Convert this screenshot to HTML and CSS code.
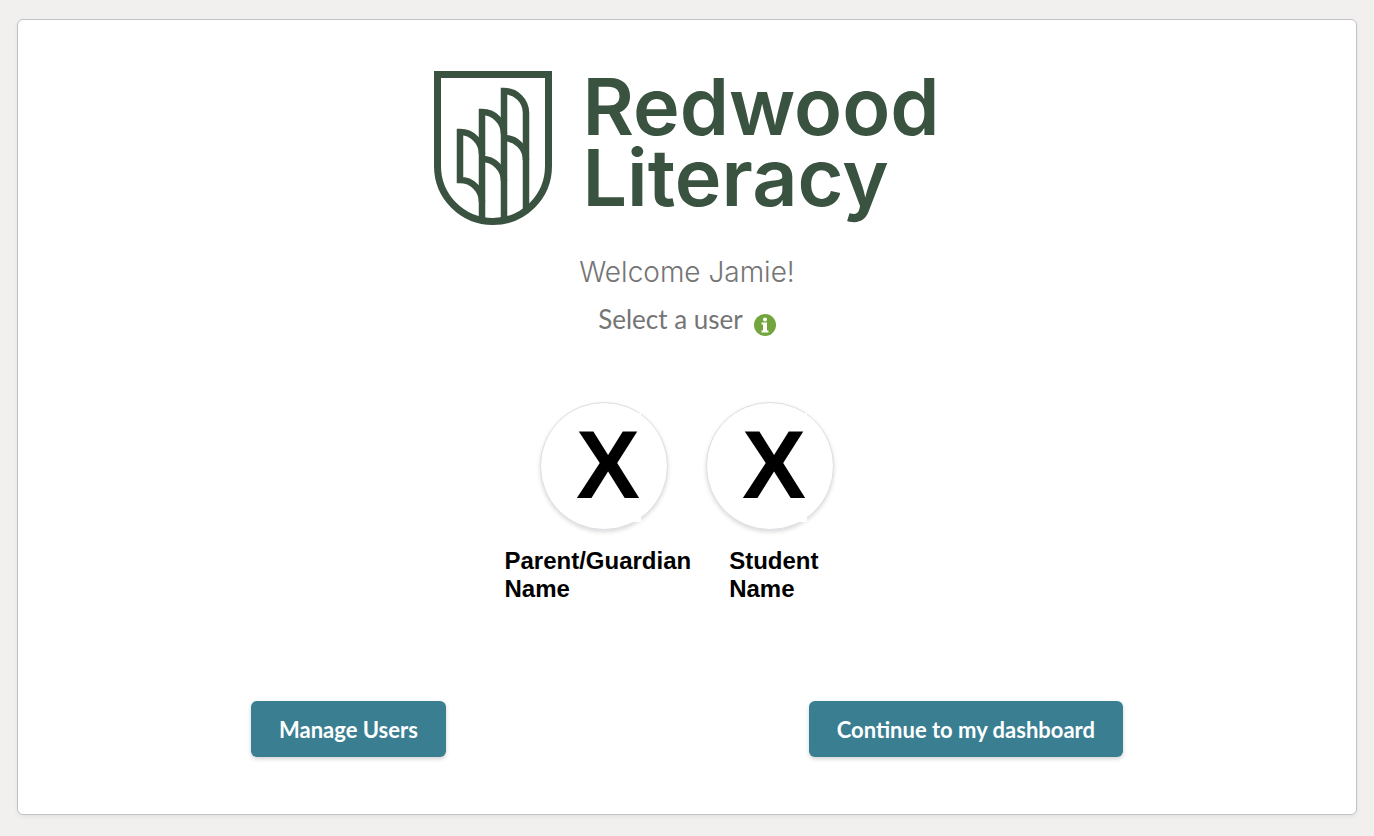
FILE: index.html
```
<!DOCTYPE html>
<html lang="en">
<head>
    <meta charset="UTF-8">
    <meta name="viewport" content="width=device-width, initial-scale=1.0">
    <title>Redwood Literacy</title>
    <link rel="stylesheet" href="styles.css">
</head>
<body>
    <main class="card">
        <div class="logo">
            <svg class="logo-mark" viewBox="0 0 118 154" aria-hidden="true">
                <path class="shield" d="M3.5 3.5H114.5V95A55.5 55.5 0 0 1 3.5 95Z"/>
                <path d="M48 83A22 22 0 0 0 26 61V109A22 22 0 0 1 48 131"/>
                <path d="M48 149V41A22 22 0 0 1 70 63"/>
                <path d="M48 88A22 22 0 0 1 70 110"/>
                <path d="M70 149V20A22 22 0 0 1 92 42V139"/>
                <path d="M70 67A22 22 0 0 1 92 89"/>
            </svg>
            <div class="logo-text">Redwood<br>Literacy</div>
        </div>

        <h1>Welcome Jamie!</h1>
        <div class="select-user">
            <h2>Select a user</h2>
            <button class="info" type="button" aria-label="Info">
                <svg viewBox="0 0 22 22" aria-hidden="true">
                    <circle cx="11" cy="11" r="11"/>
                    <circle class="dot" cx="11" cy="5.5" r="2"/>
                    <path d="M7.500 8.500H13V16.500H14.500V18.500H7.500V16.500H9V10.500H7.500z"/>
                </svg>
            </button>
        </div>

        <div class="avatars">
            <button class="avatar" type="button" aria-labelledby="parentName"><span>X</span></button>
            <button class="avatar" type="button" aria-labelledby="studentName"><span>X</span></button>
        </div>
        <div class="names">
            <div id="parentName">Parent/Guardian<br>Name</div>
            <div id="studentName">Student<br>Name</div>
        </div>

        <div class="actions">
            <button class="btn" type="button">Manage Users</button>
            <button class="btn" type="button">Continue to my dashboard</button>
        </div>
    </main>
</body>
</html>
```
FILE: styles.css
```
* {
    box-sizing: border-box;
}
body {
    margin: 0;
    padding: 19px 17px 21px;
    background-color: #f1f0ee;
    font-family: Lato, sans-serif;
    color: #757575;
}
.card {
    padding: 51px 20px 57px;
    background: #fff;
    border: 1px solid #c2c2c4;
    border-radius: 6px;
    box-shadow: 0 2px 4px rgba(0, 0, 0, 0.06);
}
.logo {
    display: flex;
    justify-content: center;
    gap: 30px;
    color: #3a5240;
}
.logo-mark {
    width: 118px;
    height: 154px;
    fill: none;
    stroke: currentColor;
    stroke-width: 6.5;
}
.shield {
    stroke-width: 7;
}
.logo-text {
    font-family: Inter, sans-serif;
    font-size: 79px;
    font-weight: 600;
    line-height: 71px;
}
h1 {
    margin: 28px 0 0;
    font-family: Inter, sans-serif;
    font-size: 28px;
    font-weight: 300;
    line-height: 38px;
    text-align: center;
}
.select-user {
    display: flex;
    align-items: flex-end;
    justify-content: center;
    gap: 11px;
    margin-top: 12px;
}
h2 {
    margin: 0;
    padding-bottom: 1px;
    font-size: 26px;
    font-weight: 400;
    line-height: 32px;
}
.info {
    width: 22px;
    height: 22px;
    padding: 0;
    background: none;
    border: none;
    cursor: pointer;
}
.info svg {
    display: block;
    fill: #fff;
}
.info circle {
    fill: #72a63c;
}
.info .dot {
    fill: #fff;
}
.avatars {
    display: flex;
    justify-content: center;
    gap: 38px;
    margin-top: 66px;
}
.avatar {
    display: flex;
    align-items: center;
    justify-content: center;
    width: 128px;
    height: 128px;
    padding: 2px 0 0 8px;
    background: #fff;
    border: 1px solid #dcdfe5;
    border-radius: 50%;
    box-shadow: 0 2px 4px rgba(0, 0, 0, 0.15);
    cursor: pointer;
}
.avatar span {
    width: 66px;
    padding-bottom: 6px;
    background: #fff;
    color: #000;
    font-family: "Liberation Sans", Arial, sans-serif;
    font-size: 96px;
    font-weight: bold;
    line-height: 103px;
}
.names {
    display: flex;
    justify-content: center;
    gap: 38px;
    margin-top: 17px;
    padding-right: 51px;
    color: #000;
    font-family: "Liberation Sans", Arial, sans-serif;
    font-size: 24px;
    font-weight: bold;
    line-height: 28px;
}
.actions {
    display: flex;
    justify-content: space-between;
    max-width: 872px;
    margin: 98px auto 0;
}
.btn {
    padding: 15px 28px 13px;
    background-color: #3a7e91;
    border: none;
    border-radius: 6px;
    box-shadow: 0 2px 4px rgba(0, 0, 0, 0.18);
    color: #fff;
    font-family: Lato, sans-serif;
    font-size: 22px;
    font-weight: 700;
    line-height: 28px;
    cursor: pointer;
}
.btn:hover {
    background-color: #30697a;
}
```
